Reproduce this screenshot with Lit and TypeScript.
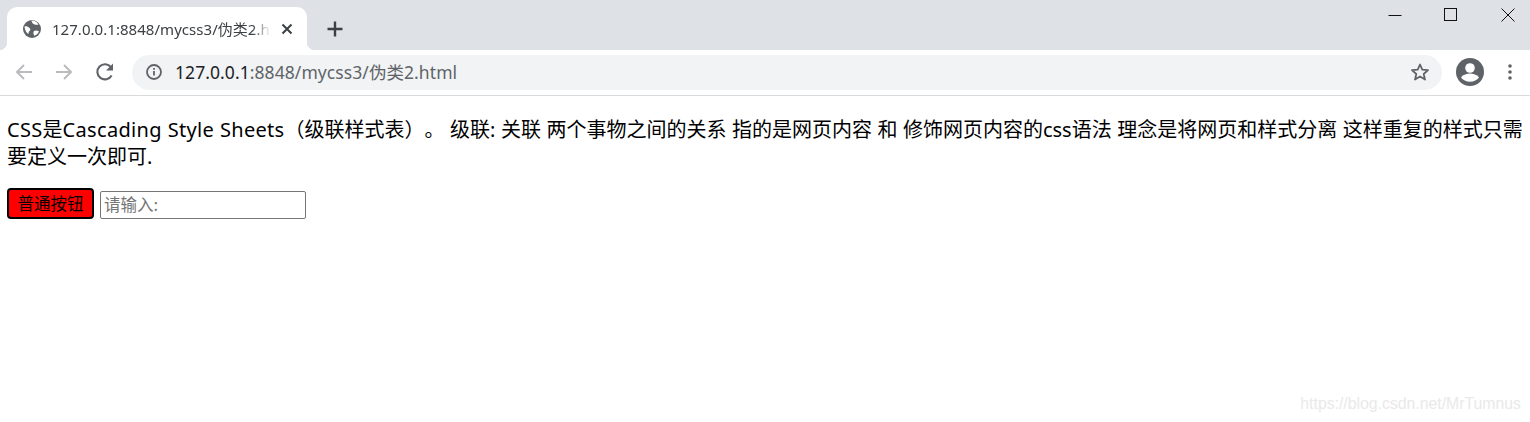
import { LitElement, html, css } from "lit";
import { customElement } from "lit/decorators.js";

@customElement("app-root")
export class AppRoot extends LitElement {
  static styles = css`
    :host { display: block; position: relative; height: 422px; overflow: hidden; background: #fff; font-family: "Noto Sans", "Noto Sans CJK SC", sans-serif; }
    .strip { height: 50px; background: #dee1e6; display: flex; align-items: flex-end; padding-left: 7px; box-sizing: border-box; }
    .tab { position: relative; width: 300px; height: 43px; background: #fff; border-radius: 10px 10px 0 0; display: flex; align-items: center; box-sizing: border-box; padding-left: 15px; }
    .tab::before, .tab::after { content: ""; position: absolute; bottom: 0; width: 8px; height: 8px; background: radial-gradient(circle at var(--c) 0, #dee1e6 8px, #fff 8.5px); }
    .tab::before { left: -8px; --c: 0; }
    .tab::after { right: -8px; --c: 100%; }
    .title { margin-left: 10px; width: 219px; overflow: hidden; white-space: nowrap; font-size: 15px; letter-spacing: .04px; color: #3c4043; flex: none; -webkit-mask-image: linear-gradient(to right, #000 200px, transparent 219px); mask-image: linear-gradient(to right, #000 200px, transparent 219px); }
    .tab-close { margin-left: 9px; display: block; flex: none; }
    .plus { margin: 0 0 12px 19px; display: block; flex: none; }
    .winctl { margin-left: auto; margin-right: -6px; align-self: flex-start; display: flex; }
    .winbtn { width: 56.5px; height: 30px; display: flex; align-items: center; justify-content: center; }
    .toolbar { height: 46px; display: flex; align-items: center; box-sizing: border-box; border-bottom: 1px solid #d9dadc; padding: 0 0 1px 14px; }
    .nav { display: block; flex: none; }
    .nav.fwd { margin-left: 20px; }
    .nav.reload { margin-left: 20px; }
    .omni { margin-left: 16px; width: 1310px; height: 35px; border-radius: 18px; background: #f1f3f4; display: flex; align-items: center; box-sizing: border-box; padding: 0 12px 0 13px; flex: none; }
    .url { margin-left: 12px; margin-top: -2px; font-size: 17.5px; letter-spacing: .07px; color: #5f6368; white-space: nowrap; }
    .url b { font-weight: 400; color: #202124; }
    .star { margin-left: auto; display: block; }
    .avatar { margin-left: 14px; display: block; flex: none; }
    .dots { margin-left: 24px; display: block; flex: none; }
    .page { padding: 20px 7px 0; font-size: 20px; color: #000; }
    p { margin: 0; line-height: 27px; word-spacing: .3px; text-spacing-trim: space-all; text-autospace: no-autospace; }
    .lat { letter-spacing: .32px; }
    .row { margin-top: 18px; display: flex; align-items: flex-end; gap: 6px; }
    button { width: 87px; height: 31px; box-sizing: border-box; padding: 0 0 2px; background: #f00; border: 2.5px solid #000; border-radius: 4px; font: 16.5px "Noto Sans CJK SC", sans-serif; color: #000; }
    input { width: 206px; height: 28px; box-sizing: border-box; padding: 0 3px 2px; border: 1px solid #767676; border-radius: 2px; font: 16.5px "Noto Sans CJK SC", sans-serif; outline: none; }
    input::placeholder { color: #757575; opacity: 1; }
    .mark { position: absolute; right: 9px; bottom: 9px; font: 15.8px "Liberation Sans", sans-serif; color: #e9e9e9; }
  `;

  render() {
    return html`
      <div class="strip">
        <div class="tab">
          <svg width="20" height="20" viewBox="0 0 20 20" style="flex:none"><circle cx="10" cy="10" r="9" fill="#5f6368"/><path d="M2.500 7.500c2-.5 3.500.3 5 1.500 1.200 1 1 2.300 0 3-.8.600-1 1.700-1 3-2-1-3.800-4-4-7.500zM9.500 1.500c3 0 5.500 1.500 7 4-1.500.5-3 .3-4.500-.3-1-.4-2.500-1.700-2.500-3.700zM12 12c1.300-.7 3-.7 5 .2-.8 2-2.300 3.700-4.500 4.500-1.200-1.400-1.500-3.500-.5-4.700z" fill="#fff"/></svg>
          <span class="title">127.0.0.1:8848/mycss3/伪类2.html</span>
          <svg class="tab-close" width="14" height="14" viewBox="0 0 14 14"><path d="M2.500 2.500l9 9M11.500 2.500l-9 9" stroke="#3c4043" stroke-width="2" fill="none"/></svg>
        </div>
        <svg class="plus" width="18" height="18" viewBox="0 0 18 18"><path d="M9 1.500v15M1.500 9h15" stroke="#3c4043" stroke-width="2.400" fill="none"/></svg>
        <div class="winctl">
          <div class="winbtn"><svg width="14" height="14" viewBox="0 0 14 14"><path d="M0.500 7.500h13" stroke="#111" stroke-width="1" fill="none"/></svg></div>
          <div class="winbtn"><svg width="14" height="14" viewBox="0 0 14 14"><rect x=".5" y=".5" width="12" height="12" stroke="#111" stroke-width="1" fill="none"/></svg></div>
          <div class="winbtn"><svg width="14" height="14" viewBox="0 0 14 14"><path d="M.5.500l13 13M13.500.5l-13 13" stroke="#111" stroke-width="1" fill="none"/></svg></div>
        </div>
      </div>
      <div class="toolbar">
        <svg class="nav" width="20" height="20" viewBox="0 0 20 20"><path d="M18 10H3M10 3l-7 7 7 7" stroke="#b9bbbe" stroke-width="2" fill="none"/></svg>
        <svg class="nav fwd" width="20" height="20" viewBox="0 0 20 20"><path d="M2 10h15M10 3l7 7-7 7" stroke="#b9bbbe" stroke-width="2" fill="none"/></svg>
        <svg class="nav reload" width="22" height="22" viewBox="0 0 22 22"><path d="M17.600 14.500A7.600 7.600 0 1 1 17 6.200" stroke="#5f6368" stroke-width="2.100" fill="none"/><path d="M19 2.500v7h-7z" fill="#5f6368"/></svg>
        <div class="omni">
          <svg width="18" height="18" viewBox="0 0 18 18" style="flex:none"><circle cx="9" cy="9" r="7" stroke="#5f6368" stroke-width="1.800" fill="none"/><path d="M9 8v4.500M9 5v1.800" stroke="#5f6368" stroke-width="1.800" fill="none"/></svg>
          <span class="url"><b>127.0.0.1</b>:8848/mycss3/伪类2.html</span>
          <svg class="star" width="20" height="20" viewBox="0 0 20 20"><path d="M10 2.500l2.300 5.200 5.700.5-4.300 3.800 1.300 5.600-5-3-5 3 1.300-5.600L2 8.200l5.700-.5z" stroke="#5f6368" stroke-width="1.800" fill="none" stroke-linejoin="round"/></svg>
        </div>
        <svg class="avatar" width="28" height="28" viewBox="0 0 28 28"><circle cx="14" cy="14" r="14" fill="#5f6368"/><circle cx="14" cy="10" r="4.800" fill="#fff"/><path d="M5 19.500c2-3 6-4 9-4s7 1 9 4c-2 2.500-5 4.300-9 4.300s-7-1.800-9-4.300z" fill="#fff"/></svg>
        <svg class="dots" width="4" height="18" viewBox="0 0 4 18"><circle cx="2" cy="3" r="1.800" fill="#5f6368"/><circle cx="2" cy="9" r="1.800" fill="#5f6368"/><circle cx="2" cy="15" r="1.800" fill="#5f6368"/></svg>
      </div>
      <div class="page">
        <p><span class="lat">CSS</span>是<span class="lat">Cascading Style Sheets</span>（级联样式表）。 级联: 关联 两个事物之间的关系 指的是网页内容 和 修饰网页内容的css语法 理念是将网页和样式分离 这样重复的样式只需要定义一次即可.</p>
        <div class="row">
          <button>普通按钮</button>
          <input placeholder="请输入:" />
        </div>
      </div>
      <div class="mark">https://blog.csdn.net/MrTumnus</div>
    `;
  }
}
